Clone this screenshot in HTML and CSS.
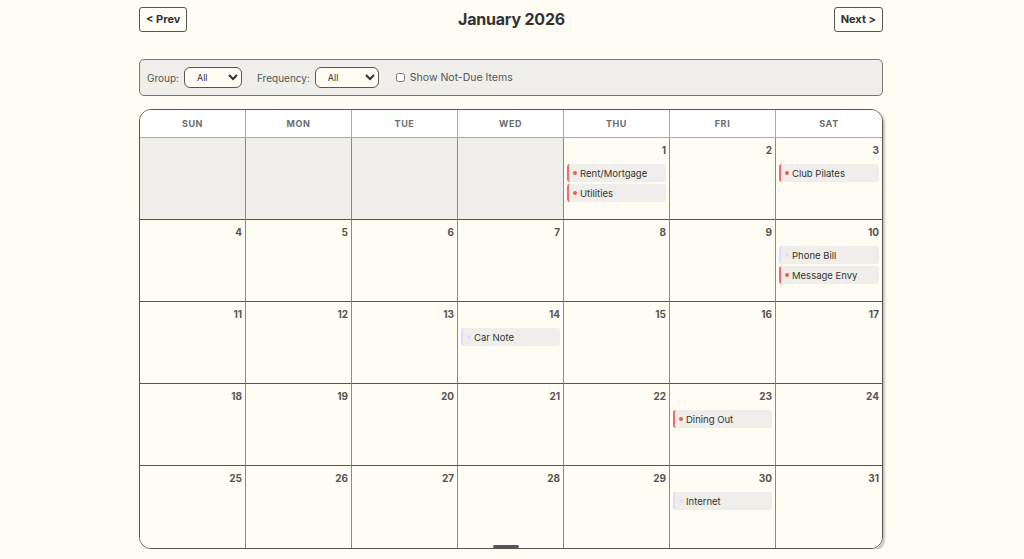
FILE: index.html
```html
<!DOCTYPE html>
<html lang="en">
<head>
    <meta charset="UTF-8">
    <meta name="viewport" content="width=device-width, initial-scale=1.0">
    <title>Bill Calendar</title>
    <link rel="stylesheet" href="styles.css">
</head>
<body>
    <div class="page">
        <div class="top-bar">
            <button class="nav-btn">&lt; Prev</button>
            <h2 class="month-title">January 2026</h2>
            <button class="nav-btn">Next &gt;</button>
        </div>

        <div class="filters">
            <label class="filter">Group:
                <select class="filter-select"><option>All</option></select>
            </label>
            <label class="filter">Frequency:
                <select class="filter-select wide"><option>All</option></select>
            </label>
            <label class="filter check">
                <input type="checkbox"> Show Not-Due Items
            </label>
        </div>

        <div class="calendar">
            <div class="dow">SUN</div>
            <div class="dow">MON</div>
            <div class="dow">TUE</div>
            <div class="dow">WED</div>
            <div class="dow">THU</div>
            <div class="dow">FRI</div>
            <div class="dow last">SAT</div>

            <!-- week 1 -->
            <div class="day blank"></div>
            <div class="day blank"></div>
            <div class="day blank"></div>
            <div class="day blank"></div>
            <div class="day"><span class="num">1</span>
                <div class="item due"><i></i>Rent/Mortgage</div>
                <div class="item due"><i></i>Utilities</div>
            </div>
            <div class="day"><span class="num">2</span></div>
            <div class="day last"><span class="num">3</span>
                <div class="item due"><i></i>Club Pilates</div>
            </div>

            <!-- week 2 -->
            <div class="day"><span class="num">4</span></div>
            <div class="day"><span class="num">5</span></div>
            <div class="day"><span class="num">6</span></div>
            <div class="day"><span class="num">7</span></div>
            <div class="day"><span class="num">8</span></div>
            <div class="day"><span class="num">9</span></div>
            <div class="day last"><span class="num">10</span>
                <div class="item later"><i></i>Phone Bill</div>
                <div class="item due"><i></i>Message Envy</div>
            </div>

            <!-- week 3 -->
            <div class="day"><span class="num">11</span></div>
            <div class="day"><span class="num">12</span></div>
            <div class="day"><span class="num">13</span></div>
            <div class="day"><span class="num">14</span>
                <div class="item later"><i></i>Car Note</div>
            </div>
            <div class="day"><span class="num">15</span></div>
            <div class="day"><span class="num">16</span></div>
            <div class="day last"><span class="num">17</span></div>

            <!-- week 4 -->
            <div class="day"><span class="num">18</span></div>
            <div class="day"><span class="num">19</span></div>
            <div class="day"><span class="num">20</span></div>
            <div class="day"><span class="num">21</span></div>
            <div class="day"><span class="num">22</span></div>
            <div class="day"><span class="num">23</span>
                <div class="item due"><i></i>Dining Out</div>
            </div>
            <div class="day last"><span class="num">24</span></div>

            <!-- week 5 -->
            <div class="day bottom"><span class="num">25</span></div>
            <div class="day bottom"><span class="num">26</span></div>
            <div class="day bottom"><span class="num">27</span></div>
            <div class="day bottom"><span class="num">28</span></div>
            <div class="day bottom"><span class="num">29</span></div>
            <div class="day bottom"><span class="num">30</span>
                <div class="item later"><i></i>Internet</div>
            </div>
            <div class="day bottom last"><span class="num">31</span></div>

            <div class="scroll-thumb"></div>
        </div>
    </div>
</body>
</html>
```

FILE: styles.css
```css
body { margin: 0; background: #fffcf4; font-family: Inter, "Liberation Sans", sans-serif; color: #333; }
.page { width: 744px; margin: 0 0 0 calc(50% - 373px); padding-top: 7px; }

.top-bar { display: flex; align-items: center; justify-content: space-between; height: 24px; }
.month-title { margin: 0 0 0 2px; font-size: 16px; font-weight: 700; color: #333; letter-spacing: -0.2px; }
.nav-btn { height: 25px; padding: 0 6px; background: #fffcf4; border: 1px solid #555; border-radius: 3px;
           font-family: inherit; font-size: 11px; font-weight: 700; color: #333; }

.filters { display: flex; align-items: center; gap: 15px; margin-top: 28px; height: 35px; padding: 0 7px;
           background: #efeeea; border: 1px solid #777; border-radius: 5px; }
.filter { display: flex; align-items: center; gap: 5px; font-size: 10px; color: #555; }
.filter-select { width: 58px; height: 21px; padding: 0 8px; border: 1px solid #555; border-radius: 6px;
                 background: #fffcf4; font-family: inherit; font-size: 9px; color: #333; }
.filter-select.wide { width: 64px; }
.check { margin-left: 2px; gap: 5px; font-size: 10.5px; }
.check input { width: 9px; height: 9px; margin: 0; }

.calendar { position: relative; display: grid; grid-template-columns: repeat(7, 1fr); grid-template-rows: 28px repeat(5, 82px);
            margin-top: 13px; border: 1px solid #555; border-radius: 12px; overflow: hidden;
            box-shadow: 2px 2px 2px rgba(0, 0, 0, 0.22); }
.dow { display: flex; align-items: center; justify-content: center; background: #fff;
       border-right: 1px solid #aaa; border-bottom: 1px solid #aaa;
       font-size: 9px; font-weight: 700; letter-spacing: 0.6px; color: #6a6d70; }
.day { display: flex; flex-direction: column; gap: 2px; padding: 6px 3px 0 3px; background: #fffcf4;
       border-right: 1px solid #8a8a8a; border-bottom: 1px solid #555; }
.day.blank { background: #efeeea; }
.last { border-right: none; }
.bottom { border-bottom: none; }
.num { align-self: flex-end; padding-right: 0; margin-bottom: 6px; font-size: 10px; font-weight: 700; color: #555; }

.item { display: flex; align-items: center; gap: 3px; height: 18px; padding-left: 4px; background: #efeeea;
        border-left: 2px solid #f26b6b; border-radius: 3px; font-size: 9.5px; color: #333; }
.item i { width: 4px; height: 4px; border-radius: 50%; background: #f25a5a; }
.item.later { border-left-color: #e1dcf7; }
.item.later i { background: #e1dcf7; }

.scroll-thumb { position: absolute; left: 353px; bottom: 0; width: 26px; height: 3px; border-radius: 2px; background: #555; }
```
